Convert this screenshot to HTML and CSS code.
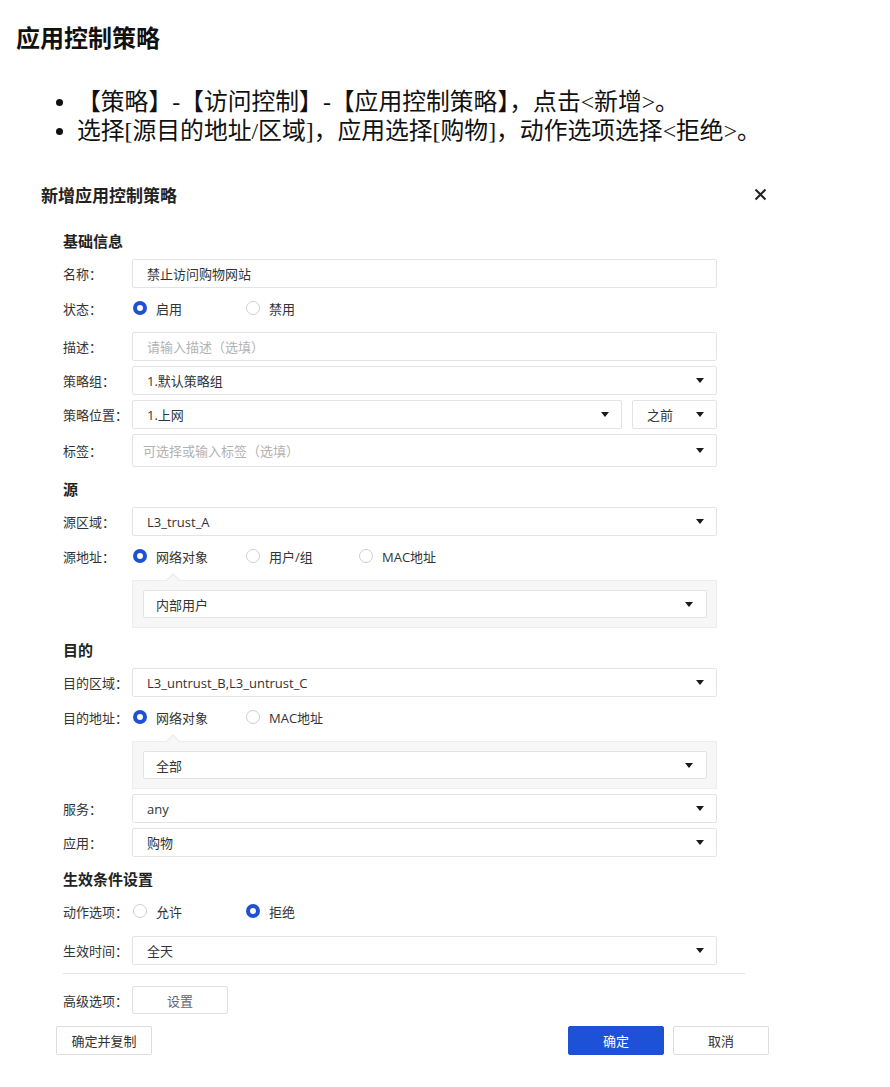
FILE: index.html
```html
<!DOCTYPE html>
<html lang="zh-CN">
<head>
<meta charset="utf-8">
<title>应用控制策略</title>
<link rel="stylesheet" href="styles.css">
</head>
<body>
<h1 class="page-title">应用控制策略</h1>
<ul class="steps">
  <li>【策略】-【访问控制】-【应用控制策略】，点击&lt;新增&gt;。</li>
  <li>选择[源目的地址/区域]，应用选择[购物]，动作选项选择&lt;拒绝&gt;。</li>
</ul>

<div class="dialog">
  <div class="dialog-head">
    <span class="dialog-title">新增应用控制策略</span>
    <svg class="close" viewBox="0 0 13 13" width="13" height="13"><path d="M1.5 1.5 L11.5 11.5 M11.5 1.5 L1.5 11.5" stroke="#222" stroke-width="2" fill="none"/></svg>
  </div>

  <div class="form">
    <div class="section">基础信息</div>
    <div class="row"><span class="lbl">名称：</span><div class="field">禁止访问购物网站</div></div>
    <div class="row row-radio"><span class="lbl">状态：</span>
      <span class="opt"><span class="radio on"></span>启用</span>
      <span class="opt"><span class="radio"></span>禁用</span>
    </div>
    <div class="row"><span class="lbl">描述：</span><div class="field placeholder">请输入描述（选填）</div></div>
    <div class="row"><span class="lbl">策略组：</span><div class="field select"><span>1.默认策略组</span><span class="caret"></span></div></div>
    <div class="row"><span class="lbl">策略位置：</span>
      <div class="field select pos-main"><span>1.上网</span><span class="caret"></span></div>
      <div class="field select pos-side"><span>之前</span><span class="caret"></span></div>
    </div>
    <div class="row"><span class="lbl">标签：</span><div class="field select tag placeholder"><span>可选择或输入标签（选填）</span><span class="caret"></span></div></div>

    <div class="section">源</div>
    <div class="row"><span class="lbl">源区域：</span><div class="field select"><span>L3_trust_A</span><span class="caret"></span></div></div>
    <div class="row row-radio"><span class="lbl">源地址：</span>
      <span class="opt"><span class="radio on"></span>网络对象</span>
      <span class="opt"><span class="radio"></span>用户/组</span>
      <span class="opt"><span class="radio"></span>MAC地址</span>
    </div>
    <div class="subbox">
      <div class="field select inner"><span>内部用户</span><span class="caret"></span></div>
    </div>

    <div class="section">目的</div>
    <div class="row"><span class="lbl">目的区域：</span><div class="field select"><span>L3_untrust_B,L3_untrust_C</span><span class="caret"></span></div></div>
    <div class="row row-radio"><span class="lbl">目的地址：</span>
      <span class="opt"><span class="radio on"></span>网络对象</span>
      <span class="opt"><span class="radio"></span>MAC地址</span>
    </div>
    <div class="subbox">
      <div class="field select inner"><span>全部</span><span class="caret"></span></div>
    </div>
    <div class="row"><span class="lbl">服务：</span><div class="field select"><span>any</span><span class="caret"></span></div></div>
    <div class="row"><span class="lbl">应用：</span><div class="field select"><span>购物</span><span class="caret"></span></div></div>

    <div class="section">生效条件设置</div>
    <div class="row row-radio row-radio-lead"><span class="lbl">动作选项：</span>
      <span class="opt"><span class="radio"></span>允许</span>
      <span class="opt"><span class="radio on"></span>拒绝</span>
    </div>
    <div class="row"><span class="lbl">生效时间：</span><div class="field select"><span>全天</span><span class="caret"></span></div></div>
    <div class="divider"></div>
    <div class="row"><span class="lbl">高级选项：</span><button class="btn-set">设置</button></div>
  </div>

  <div class="footer">
    <button class="btn">确定并复制</button>
    <div class="footer-right">
      <button class="btn primary">确定</button>
      <button class="btn">取消</button>
    </div>
  </div>
</div>
</body>
</html>
```

FILE: styles.css
```css
* { box-sizing: border-box; }

body {
  margin: 0;
  background: #fff;
  color: #333;
  font-family: "Open Sans", "Noto Sans CJK SC", sans-serif;
  font-size: 13px;
}

.page-title {
  margin: 24px 0 0 16px;
  font-family: "Liberation Serif", "Noto Sans CJK SC", serif;
  font-size: 24px;
  line-height: 30px;
  font-weight: bold;
  color: #111;
}

.steps {
  margin: 34px 0 0;
  padding-left: 77px;
  font-family: "Liberation Serif", "Noto Sans CJK SC", serif;
  font-size: 23.8px;
  line-height: 29px;
  color: #111;
}

.dialog {
  margin: 36px 0 0 41px;
  width: 740px;
}

.dialog-head {
  display: flex;
  justify-content: space-between;
  align-items: center;
  height: 24px;
  padding-right: 14px;
}

.dialog-title {
  font-size: 17px;
  font-weight: bold;
  color: #222;
}

.close { display: block; }

.form {
  margin-left: 22px;
  width: 682px;
  padding-top: 13px;
}

.section {
  font-size: 15px;
  line-height: 20px;
  font-weight: bold;
  color: #222;
  margin: 12px 0 8px;
}

.row {
  display: flex;
  align-items: center;
  margin-top: 5px;
}

.lbl {
  width: 69px;
  flex: none;
  color: #333;
  white-space: nowrap;
}

.field {
  width: 585px;
  height: 29px;
  border: 1px solid #e3e3e3;
  border-radius: 2px;
  background: #fff;
  padding: 0 14px;
  display: flex;
  align-items: center;
  color: #333;
}

.select { justify-content: space-between; padding-right: 12px; }

.placeholder { color: #b2b2b2; }

.caret {
  width: 0;
  height: 0;
  border-left: 4px solid transparent;
  border-right: 4px solid transparent;
  border-top: 5px solid #1a1a1a;
  flex: none;
}

.pos-main { width: 490px; }
.pos-side { width: 85px; margin-left: 10px; }

.tag { height: 33px; padding-left: 10px; }

.row-radio {
  height: 20px;
  margin: 10px 0 14px;
}

.row-radio-lead {
  margin: 12px 0 15px;
}

.opt {
  width: 113px;
  display: flex;
  align-items: center;
  gap: 9px;
  padding-left: 1px;
  color: #333;
}

.radio {
  width: 14px;
  height: 14px;
  border-radius: 50%;
  border: 1px solid #cfcfcf;
  background: #fff;
  flex: none;
}

.radio.on { border: 4px solid #1f50d6; }

.subbox {
  position: relative;
  margin-left: 69px;
  width: 585px;
  background: #f7f7f7;
  border: 1px solid #ededed;
  padding: 9px 9px 9px 10px;
}

.subbox::before,
.subbox::after {
  content: "";
  position: absolute;
  width: 0;
  height: 0;
  border-left: 8px solid transparent;
  border-right: 8px solid transparent;
}

.subbox::before {
  left: 32px;
  top: -8px;
  border-bottom: 8px solid #ededed;
}

.subbox::after {
  left: 33px;
  top: -6px;
  border-left-width: 7px;
  border-right-width: 7px;
  border-bottom: 7px solid #f7f7f7;
}

.inner {
  width: 100%;
  height: 28px;
  padding-left: 12px;
  padding-right: 13px;
}

.divider {
  height: 1px;
  background: #e4e4ea;
  margin: 8px 0 12px;
}

.btn-set {
  width: 96px;
  height: 28px;
  border: 1px solid #e0e0e0;
  border-radius: 2px;
  background: #fff;
  color: #666;
  font-family: inherit;
  font-size: 13px;
  padding: 0;
}

.footer {
  display: flex;
  justify-content: space-between;
  margin: 12px 0 0 15px;
  width: 713px;
}

.footer-right {
  display: flex;
  gap: 9px;
}

.btn {
  width: 96px;
  height: 29px;
  border: 1px solid #dddddd;
  border-radius: 2px;
  background: #fff;
  color: #333;
  font-family: inherit;
  font-size: 13px;
  padding: 0;
}

.btn.primary {
  background: #1d51d8;
  border-color: #1d51d8;
  color: #fff;
}
```
